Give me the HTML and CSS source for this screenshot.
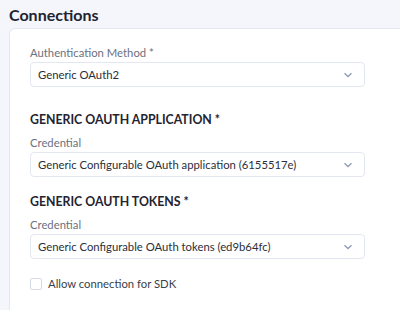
FILE: index.html
```html
<!DOCTYPE html>
<html lang="en">

<head>
  <meta charset="UTF-8">
  <title>Connections</title>
  <link rel="stylesheet" href="styles.css">
</head>

<body>
  <h1 class="page-title">Connections</h1>

  <div class="panel">
    <div class="field field-first">
      <label class="field-label">Authentication Method *</label>
      <div class="select">
        <span>Generic OAuth2</span>
        <svg class="chevron" width="10" height="6" viewBox="0 0 10 6"><path d="M1.5 1.2 L5 4.5 L8.5 1.2" fill="none" stroke="#8e9ab8" stroke-width="1.3"/></svg>
      </div>
    </div>

    <h2 class="group-title">GENERIC OAUTH APPLICATION *</h2>
    <div class="field">
      <label class="field-label">Credential</label>
      <div class="select">
        <span>Generic Configurable OAuth application (6155517e)</span>
        <svg class="chevron" width="10" height="6" viewBox="0 0 10 6"><path d="M1.5 1.2 L5 4.5 L8.5 1.2" fill="none" stroke="#8e9ab8" stroke-width="1.3"/></svg>
      </div>
    </div>

    <h2 class="group-title">GENERIC OAUTH TOKENS *</h2>
    <div class="field">
      <label class="field-label">Credential</label>
      <div class="select">
        <span>Generic Configurable OAuth tokens (ed9b64fc)</span>
        <svg class="chevron" width="10" height="6" viewBox="0 0 10 6"><path d="M1.5 1.2 L5 4.5 L8.5 1.2" fill="none" stroke="#8e9ab8" stroke-width="1.3"/></svg>
      </div>
    </div>

    <label class="check">
      <span class="box"></span>
      Allow connection for SDK
    </label>
  </div>
</body>

</html>
```

FILE: styles.css
```css
body {
  font-family: 'Lato', sans-serif;
  background-color: #f4f6fb;
  color: #1f2430;
  margin: 0;
  padding: 0 0 0 9px;
  overflow: hidden;
}

.page-title {
  font-size: 16px;
  font-weight: 700;
  margin: 0;
  padding: 5px 0 0 0;
  height: 23px;
  line-height: 20px;
}

.panel {
  background: #ffffff;
  border: 1px solid #e3e7f0;
  border-right: none;
  border-bottom: none;
  border-radius: 6px 0 0 0;
  padding: 16px 0 0 20px;
  box-sizing: border-box;
  width: 391px;
  height: 282px;
}

.field-first {
  margin-bottom: 25px;
}

.field-label {
  display: block;
  font-size: 11.3px;
  color: #6b7180;
  line-height: 16px;
  margin-bottom: 1px;
}

.select {
  display: flex;
  align-items: center;
  justify-content: space-between;
  width: 335px;
  height: 25px;
  box-sizing: border-box;
  border: 1px solid #e3e7f2;
  border-radius: 4px;
  padding: 0 11px 0 7px;
  font-size: 11.3px;
  color: #2a2f3a;
}

.chevron {
  display: block;
}

.group-title {
  font-size: 12.3px;
  font-weight: 700;
  color: #1f2430;
  margin: 17px 0 7px 0;
  line-height: 16px;
}

.check {
  display: flex;
  align-items: center;
  gap: 6px;
  margin-top: 18px;
  font-size: 11.3px;
  color: #3a3f4a;
}

.box {
  width: 10px;
  height: 10px;
  border: 1px solid #d5dae6;
  border-radius: 2px;
}
```
